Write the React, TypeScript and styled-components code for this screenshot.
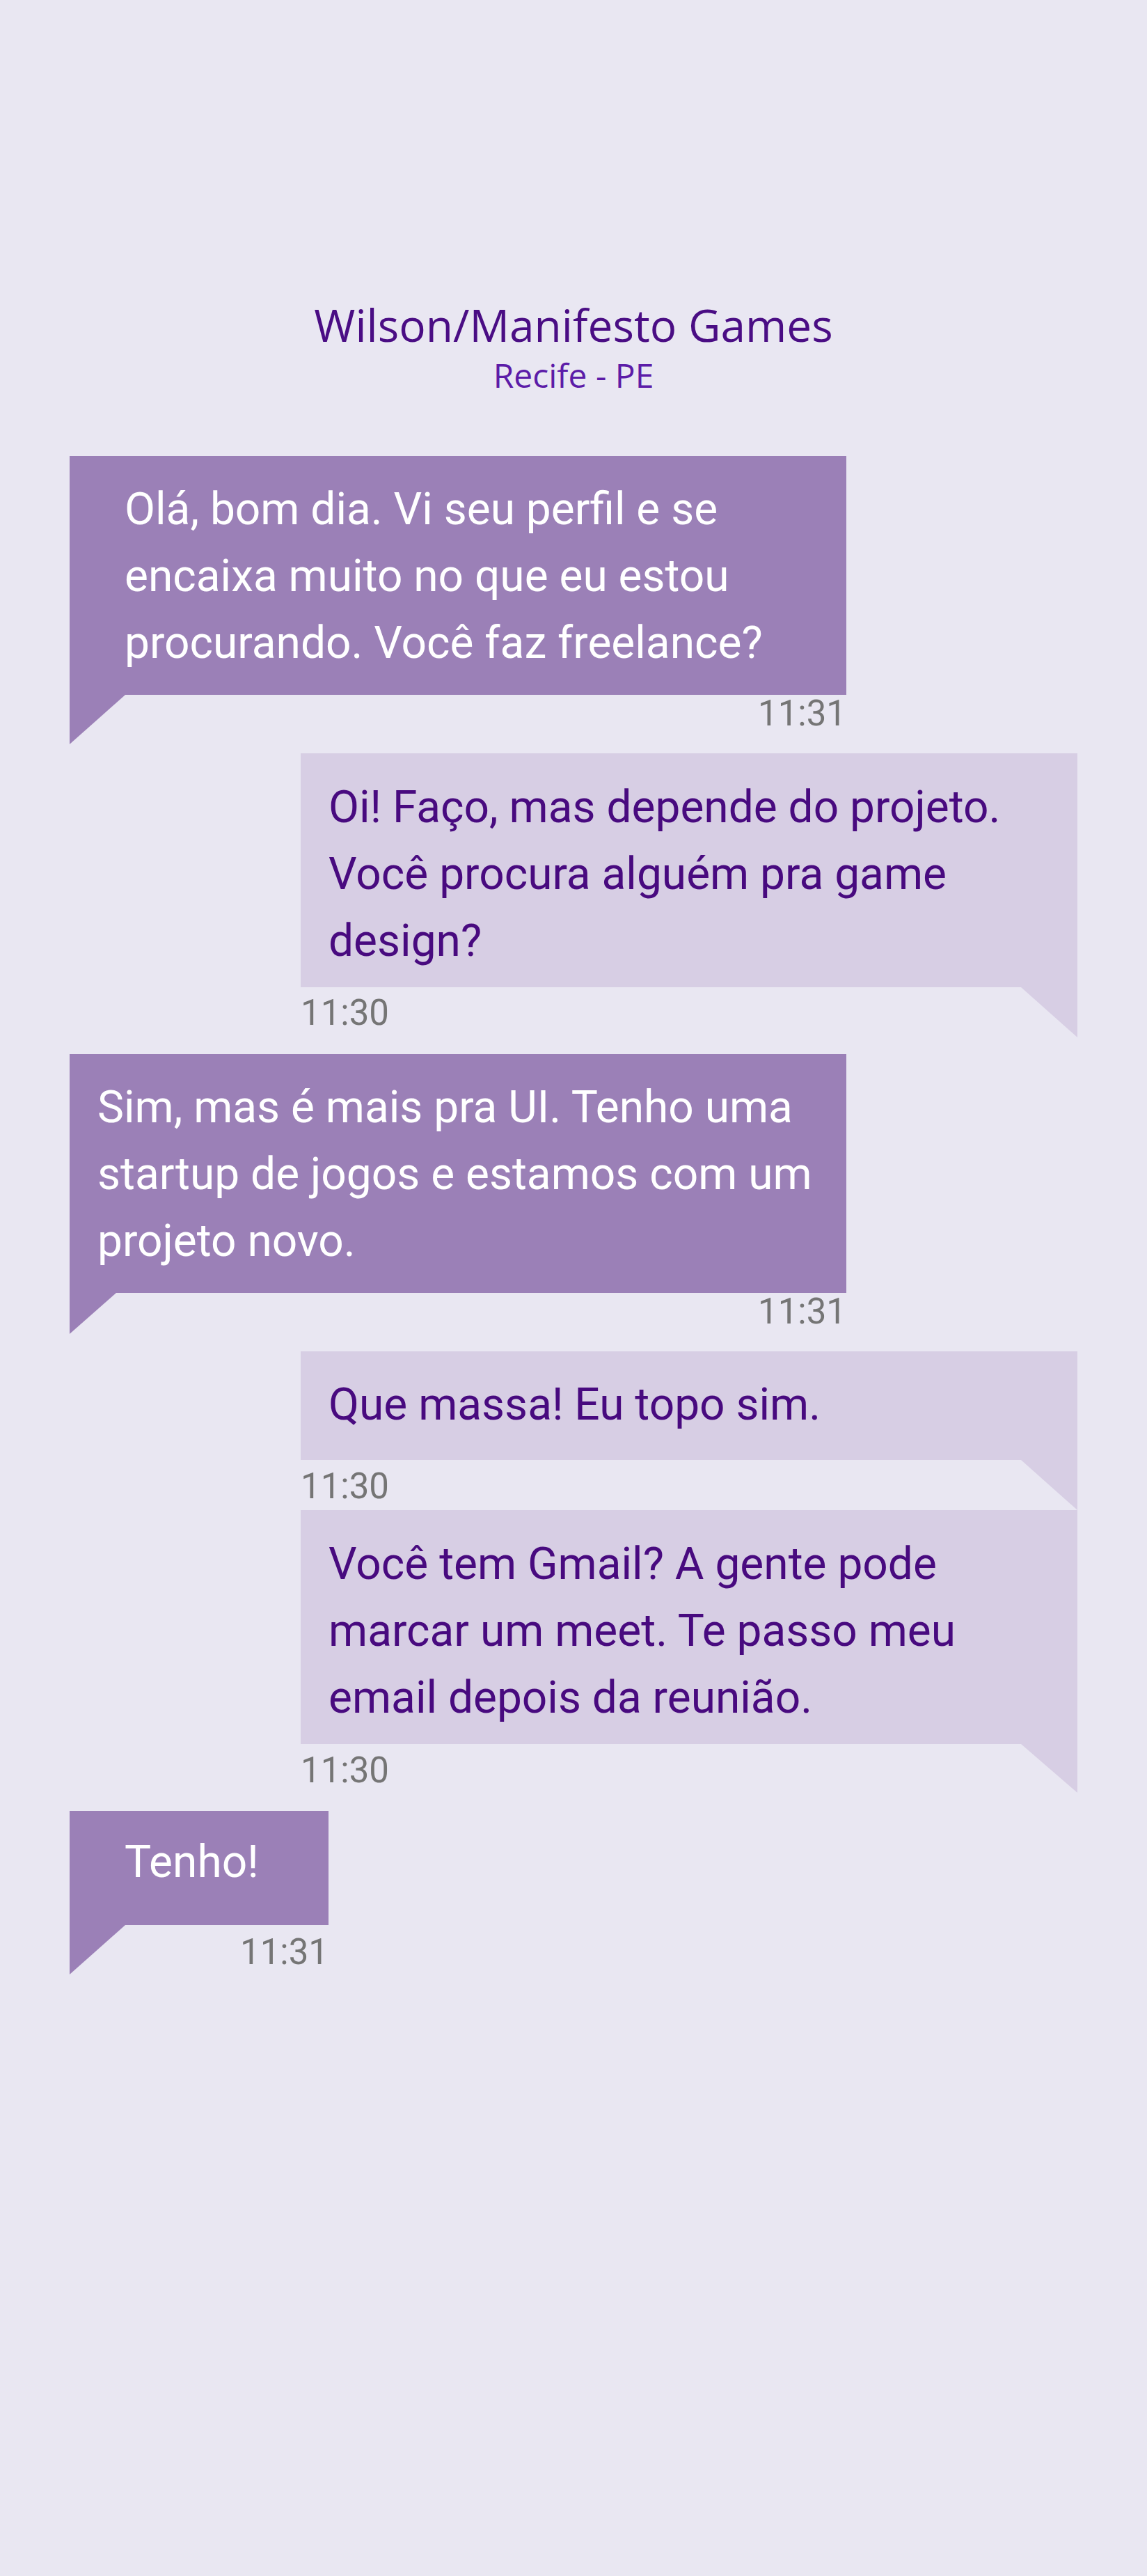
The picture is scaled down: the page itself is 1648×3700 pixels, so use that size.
import React from "react";
import styled, { createGlobalStyle } from "styled-components";

const GlobalStyle = createGlobalStyle`
  html, body {
    margin: 0;
    padding: 0;
    background: #e9e7f2;
  }
  body {
    font-family: Roboto, "Liberation Sans", sans-serif;
  }
`;

type Side = "in" | "out";

const Page = styled.div`
  min-height: 3700px;
  background: #e9e7f2;
  padding: 435px 100px 0;
  box-sizing: border-box;
  display: flex;
  flex-direction: column;
`;

const Header = styled.header`
  display: flex;
  flex-direction: column;
  align-items: center;
  gap: 16px;
  font-family: "Open Sans", "Noto Sans", sans-serif;
`;

const Title = styled.h1`
  margin: 0;
  font-size: 64px;
  line-height: 64px;
  font-weight: 400;
  color: #4a0d84;
`;

const Subtitle = styled.div`
  font-size: 48px;
  line-height: 48px;
  color: #5c1ca8;
`;

const Thread = styled.div`
  display: flex;
  flex-direction: column;
  padding-top: 92px;
`;

const Message = styled.div<{ $side: Side; $gap: number; $width: number }>`
  display: flex;
  flex-direction: column;
  width: ${(p) => p.$width}px;
  align-self: ${(p) => (p.$side === "in" ? "flex-start" : "flex-end")};
  margin-top: ${(p) => p.$gap}px;
`;

const Bubble = styled.div<{ $side: Side; $pad: string }>`
  background: ${(p) => (p.$side === "in" ? "#9b80b7" : "#d7cee4")};
  color: ${(p) => (p.$side === "in" ? "#ffffff" : "#480a7f")};
  padding: ${(p) => p.$pad};
  font-size: 64px;
  line-height: 96px;
  white-space: pre-line;
`;

const Footer = styled.div<{ $side: Side; $h: number }>`
  display: flex;
  flex-direction: ${(p) => (p.$side === "in" ? "row" : "row-reverse")};
  justify-content: space-between;
  align-items: flex-start;
  height: ${(p) => p.$h}px;
`;

const Tail = styled.div<{ $side: Side; $w: number; $h: number }>`
  width: ${(p) => p.$w}px;
  height: ${(p) => p.$h}px;
  flex-shrink: 0;
  background: ${(p) => (p.$side === "in" ? "#9b80b7" : "#d7cee4")};
  clip-path: ${(p) =>
    p.$side === "in"
      ? "polygon(0 0, 100% 0, 0 100%)"
      : "polygon(0 0, 100% 0, 100% 100%)"};
`;

const Stamp = styled.span<{ $gap: number }>`
  margin-top: ${(p) => p.$gap}px;
  font-size: 51px;
  line-height: 51px;
  color: #757575;
`;

type Msg = {
  side: Side;
  text: string;
  time: string;
  gap: number;
  pad: string;
  tail: [number, number];
  stampGap: number;
  width: number;
};

const messages: Msg[] = [
  {
    side: "in",
    text: "Olá, bom dia. Vi seu perfil e se\nencaixa muito no que eu estou\nprocurando. Você faz freelance?",
    time: "11:31",
    gap: 0,
    pad: "29px 0 26px 79px",
    tail: [80, 71],
    stampGap: 1,
    width: 1116,
  },
  {
    side: "out",
    text: "Oi! Faço, mas depende do projeto.\nVocê procura alguém pra game\ndesign?",
    time: "11:30",
    gap: 13,
    pad: "30px 0 18px 40px",
    tail: [81, 72],
    stampGap: 11,
    width: 1116,
  },
  {
    side: "in",
    text: "Sim, mas é mais pra UI. Tenho uma\nstartup de jogos e estamos com um\nprojeto novo.",
    time: "11:31",
    gap: 24,
    pad: "29px 0 26px 40px",
    tail: [67, 59],
    stampGap: 1,
    width: 1116,
  },
  {
    side: "out",
    text: "Que massa! Eu topo sim.",
    time: "11:30",
    gap: 25,
    pad: "29px 0 31px 40px",
    tail: [81, 72],
    stampGap: 12,
    width: 1116,
  },
  {
    side: "out",
    text: "Você tem Gmail? A gente pode\nmarcar um meet. Te passo meu\nemail depois da reunião.",
    time: "11:30",
    gap: 0,
    pad: "30px 0 18px 40px",
    tail: [81, 70],
    stampGap: 12,
    width: 1116,
  },
  {
    side: "in",
    text: "Tenho!",
    time: "11:31",
    gap: 26,
    pad: "26px 0 42px 79px",
    tail: [80, 71],
    stampGap: 13,
    width: 372,
  },
];

export default function App() {
  return (
    <>
      <GlobalStyle />
      <Page>
        <Header>
          <Title>Wilson/Manifesto Games</Title>
          <Subtitle>Recife - PE</Subtitle>
        </Header>
        <Thread>
          {messages.map((m, i) => (
            <Message key={i} $side={m.side} $gap={m.gap} $width={m.width}>
              <Bubble $side={m.side} $pad={m.pad}>
                {m.text}
              </Bubble>
              <Footer $side={m.side} $h={m.tail[1]}>
                <Tail $side={m.side} $w={m.tail[0]} $h={m.tail[1]} />
                <Stamp $gap={m.stampGap}>{m.time}</Stamp>
              </Footer>
            </Message>
          ))}
        </Thread>
      </Page>
    </>
  );
}
